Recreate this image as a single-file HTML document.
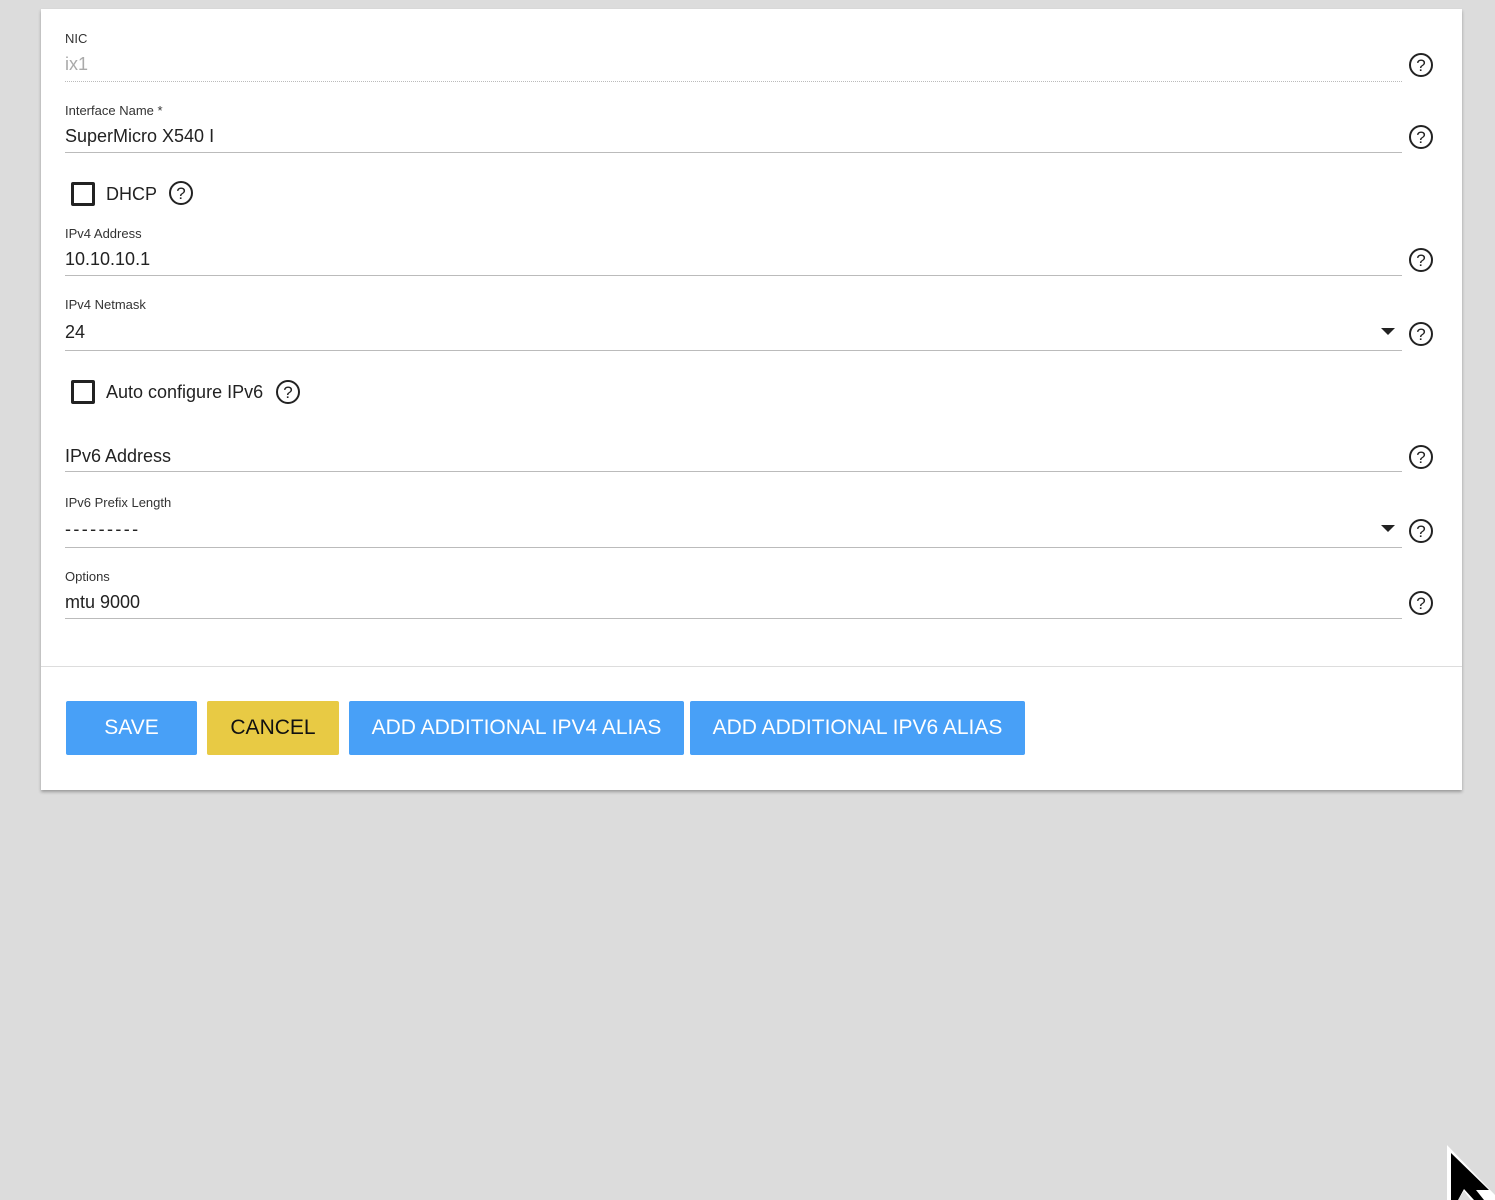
<!DOCTYPE html>
<html><head><meta charset="utf-8">
<style>
*{margin:0;padding:0;box-sizing:border-box}
html,body{width:1495px;height:1200px;background:#dcdcdc;overflow:hidden;font-family:"Liberation Sans",sans-serif;color:#222}
.card{position:absolute;left:41px;top:9px;width:1421px;height:781px;background:#fff;box-shadow:0 2px 3px rgba(0,0,0,.3)}
.a{position:absolute}
.lbl{position:absolute;left:24px;font-size:13px;color:#333}
.val{position:absolute;left:24px;font-size:18px;color:#222}
.line{position:absolute;left:24px;width:1337px;height:1px;background:#bbb}
.help{position:absolute;width:26px;height:26px}
.cb{position:absolute;width:24px;height:24px;border:3px solid #222;border-radius:2px}
.tri{position:absolute;width:0;height:0;border-left:7px solid transparent;border-right:7px solid transparent;border-top:7px solid #222}
.btn{position:absolute;top:692px;height:54px;border-radius:2px;font-size:21px;display:flex;align-items:center;justify-content:center;color:#fff;background:#48a0f7}
</style></head><body>
<div class="card">
  <div class="lbl" style="top:22px">NIC</div>
  <div class="val" style="top:45px;color:#aaa">ix1</div>
  <div class="a" style="left:24px;top:72px;width:1337px;border-top:1px dotted #bbb"></div>
  <svg class="help" style="left:1367px;top:43px" viewBox="0 0 26 26"><circle cx="13" cy="13" r="11" fill="none" stroke="#222" stroke-width="2"/><text x="13" y="19" text-anchor="middle" font-family="Liberation Sans" font-size="17" fill="#222">?</text></svg>

  <div class="lbl" style="top:94px">Interface Name *</div>
  <div class="val" style="top:117px">SuperMicro X540 I</div>
  <div class="line" style="top:143px"></div>
  <svg class="help" style="left:1367px;top:115px" viewBox="0 0 26 26"><circle cx="13" cy="13" r="11" fill="none" stroke="#222" stroke-width="2"/><text x="13" y="19" text-anchor="middle" font-family="Liberation Sans" font-size="17" fill="#222">?</text></svg>

  <div class="cb" style="left:30px;top:173px"></div>
  <div class="val" style="left:65px;top:175px">DHCP</div>
  <svg class="help" style="left:127px;top:171px" viewBox="0 0 26 26"><circle cx="13" cy="13" r="11" fill="none" stroke="#222" stroke-width="2"/><text x="13" y="19" text-anchor="middle" font-family="Liberation Sans" font-size="17" fill="#222">?</text></svg>

  <div class="lbl" style="top:217px">IPv4 Address</div>
  <div class="val" style="top:240px">10.10.10.1</div>
  <div class="line" style="top:266px"></div>
  <svg class="help" style="left:1367px;top:238px" viewBox="0 0 26 26"><circle cx="13" cy="13" r="11" fill="none" stroke="#222" stroke-width="2"/><text x="13" y="19" text-anchor="middle" font-family="Liberation Sans" font-size="17" fill="#222">?</text></svg>

  <div class="lbl" style="top:288px">IPv4 Netmask</div>
  <div class="val" style="top:313px">24</div>
  <div class="line" style="top:341px"></div>
  <div class="tri" style="left:1340px;top:319px"></div>
  <svg class="help" style="left:1367px;top:312px" viewBox="0 0 26 26"><circle cx="13" cy="13" r="11" fill="none" stroke="#222" stroke-width="2"/><text x="13" y="19" text-anchor="middle" font-family="Liberation Sans" font-size="17" fill="#222">?</text></svg>

  <div class="cb" style="left:30px;top:371px"></div>
  <div class="val" style="left:65px;top:373px">Auto configure IPv6</div>
  <svg class="help" style="left:234px;top:370px" viewBox="0 0 26 26"><circle cx="13" cy="13" r="11" fill="none" stroke="#222" stroke-width="2"/><text x="13" y="19" text-anchor="middle" font-family="Liberation Sans" font-size="17" fill="#222">?</text></svg>

  <div class="val" style="top:437px">IPv6 Address</div>
  <div class="line" style="top:462px"></div>
  <svg class="help" style="left:1367px;top:435px" viewBox="0 0 26 26"><circle cx="13" cy="13" r="11" fill="none" stroke="#222" stroke-width="2"/><text x="13" y="19" text-anchor="middle" font-family="Liberation Sans" font-size="17" fill="#222">?</text></svg>

  <div class="lbl" style="top:486px">IPv6 Prefix Length</div>
  <div class="val" style="top:510px;font-size:18px;letter-spacing:2.4px">---------</div>
  <div class="line" style="top:538px"></div>
  <div class="tri" style="left:1340px;top:516px"></div>
  <svg class="help" style="left:1367px;top:509px" viewBox="0 0 26 26"><circle cx="13" cy="13" r="11" fill="none" stroke="#222" stroke-width="2"/><text x="13" y="19" text-anchor="middle" font-family="Liberation Sans" font-size="17" fill="#222">?</text></svg>

  <div class="lbl" style="top:560px">Options</div>
  <div class="val" style="top:583px">mtu 9000</div>
  <div class="line" style="top:609px"></div>
  <svg class="help" style="left:1367px;top:581px" viewBox="0 0 26 26"><circle cx="13" cy="13" r="11" fill="none" stroke="#222" stroke-width="2"/><text x="13" y="19" text-anchor="middle" font-family="Liberation Sans" font-size="17" fill="#222">?</text></svg>

  <div class="a" style="left:0;top:657px;width:1421px;height:1px;background:#ddd"></div>

  <div class="btn" style="left:25px;width:131px">SAVE</div>
  <div class="btn" style="left:166px;width:132px;background:#e8ca44;color:#111">CANCEL</div>
  <div class="btn" style="left:308px;width:335px">ADD ADDITIONAL IPV4 ALIAS</div>
  <div class="btn" style="left:649px;width:335px">ADD ADDITIONAL IPV6 ALIAS</div>
</div>
<svg class="a" style="left:1444px;top:1143px" width="51" height="57" viewBox="0 0 51 57"><path d="M3 2 L3 57 L14 57 L20 48 L27 57 L51 57 L51 52 Z" fill="#fff"/><path d="M7 10 L7 57 L14 57 L20 46 L30 57 L40 57 L32 47 L45 47 Z" fill="#000"/></svg>
</body></html>
